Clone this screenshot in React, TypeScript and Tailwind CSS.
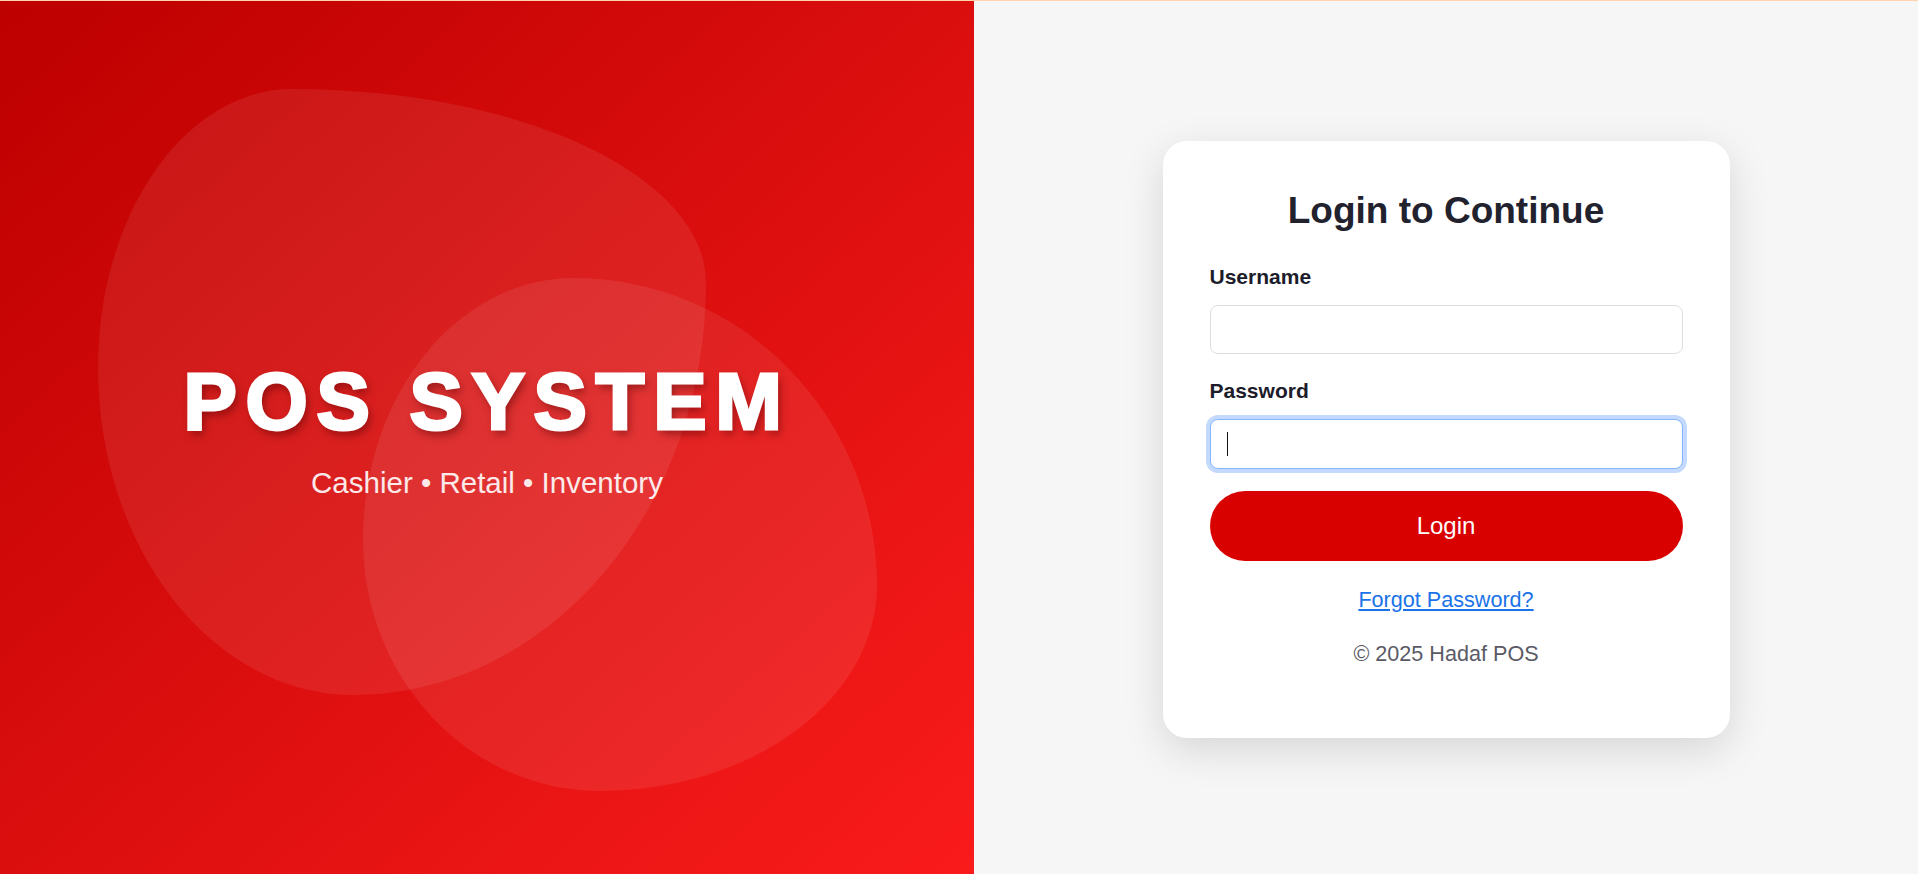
import React from "react";

const font = "font-['Liberation_Sans',Arial,Helvetica,sans-serif]";

function BrandPanel() {
  return (
    <div className="relative w-[974px] shrink-0 overflow-hidden bg-linear-to-br from-[#bd0000] to-[#fa1b1b]">
      {/* soft blobs */}
      <div className="absolute left-[98px] top-[89px] h-[606px] w-[608px] rounded-[32%_68%_58%_42%/46%_32%_68%_54%] bg-white/[0.08]" />
      <div className="absolute left-[363px] top-[278px] h-[513px] w-[514px] rounded-[41%_59%_54%_46%/51%_60%_40%_49%] bg-white/[0.08]" />

      <div className="relative flex h-full flex-col items-center justify-center pb-[14px] text-white">
        <h1 className="text-[80px] font-bold leading-none tracking-[8.7px] [-webkit-text-stroke:3px_white] [text-shadow:3px_5px_9px_rgba(80,0,0,0.5)]">
          POS SYSTEM
        </h1>
        <p className="mt-[26px] text-[29.5px] leading-none text-white/90">
          Cashier • Retail • Inventory
        </p>
      </div>
    </div>
  );
}

function LoginCard() {
  return (
    <div className="w-[567px] rounded-[24px] bg-white px-[47px] pt-[47px] pb-[72px] shadow-[0_12px_40px_rgba(0,0,0,0.13)]">
      <h2 className="text-center text-[37px] font-bold leading-[45px] text-[#22222e]">
        Login to Continue
      </h2>

      <label className="mt-[31px] block text-[21px] font-bold leading-[25px] text-[#1c1c2a]">
        Username
      </label>
      <input
        type="text"
        className="mt-[16px] block h-[49px] w-full rounded-[8px] border border-[#dedede] bg-white px-[17px] text-[20px] outline-none"
      />

      <label className="mt-[24px] block text-[21px] font-bold leading-[25px] text-[#1c1c2a]">
        Password
      </label>
      <div className="relative mt-[16px]">
        <input
          type="password"
          className="block h-[50px] w-full rounded-[8px] border border-[#86b7fe] bg-white px-[17px] text-[20px] shadow-[0_0_0_4px_#c3dafe] outline-none"
        />
        <span className="pointer-events-none absolute left-[17px] top-[13px] h-[24px] w-px bg-[#111]" />
      </div>

      <button className="mt-[22px] block h-[70px] w-full rounded-full bg-[#d90000] text-[24px] text-white">
        Login
      </button>

      <div className="mt-[26px] text-center text-[21.6px] leading-[25px]">
        <a href="#" className="text-[#1a73e8] underline">
          Forgot Password?
        </a>
      </div>

      <p className="mt-[29px] text-center text-[21.6px] leading-[25px] text-[#5a5a66]">
        © 2025 Hadaf POS
      </p>
    </div>
  );
}

export default function App() {
  return (
    <div className={`relative flex h-[874px] w-full ${font}`}>
      <div className="absolute inset-x-0 top-0 z-10 h-px bg-[#ffd3ab]" />
      <BrandPanel />
      <div className="flex flex-1 items-center justify-center bg-[#f6f6f6] pt-[5px]">
        <LoginCard />
      </div>
    </div>
  );
}
